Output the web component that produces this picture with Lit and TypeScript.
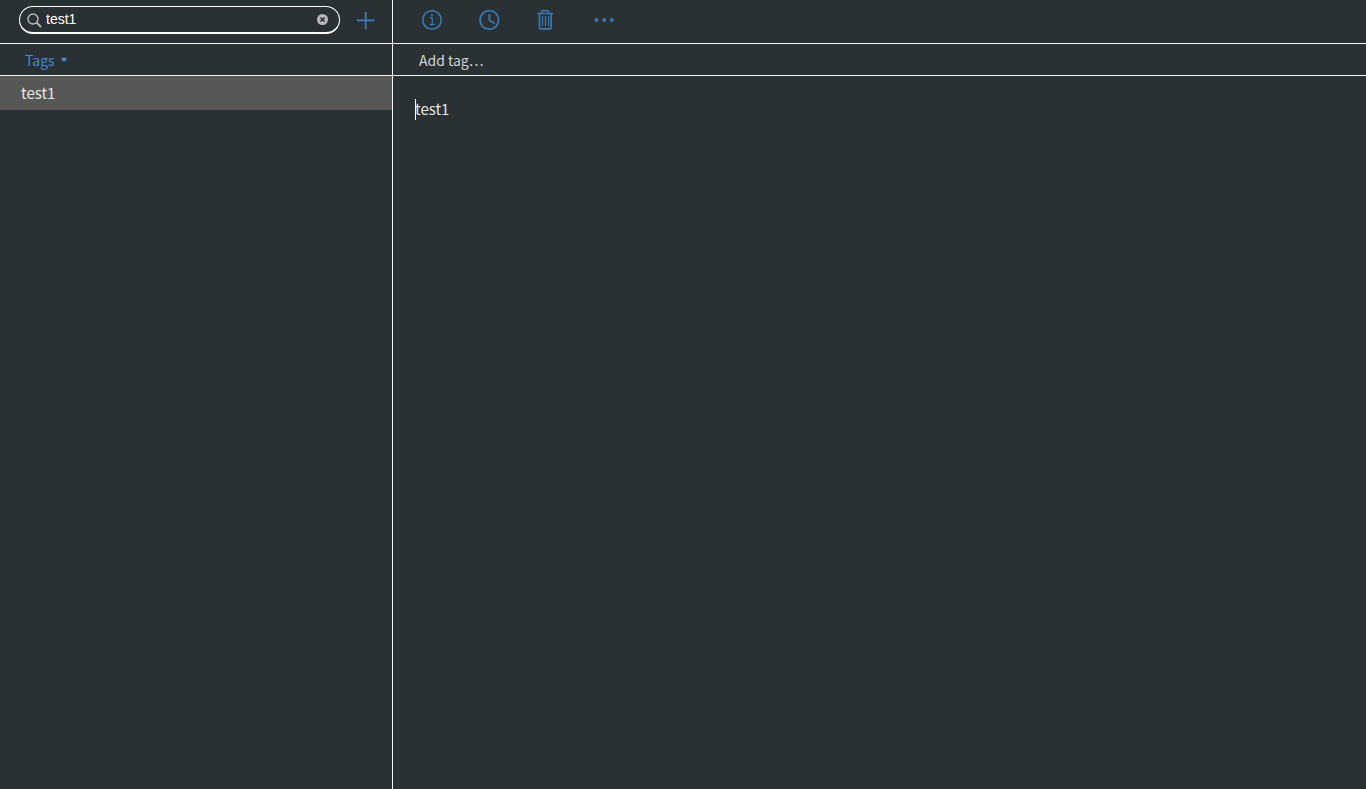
import { LitElement, html, css } from "lit";
import { customElement, state } from "lit/decorators.js";

@customElement("app-root")
export class AppRoot extends LitElement {
  static styles = css`
    :host {
      display: flex;
      height: 100vh;
      overflow: hidden;
      background: #2a3135;
      color: #e6e6e2;
      font-family: "Noto Sans CJK JP", "Noto Sans", sans-serif;
      font-size: 15px;
      --line: #f4f4f4;
      --accent: #3a79b0;
    }
    * {
      box-sizing: border-box;
    }
    button,
    input,
    textarea {
      margin: 0;
      padding: 0;
      border: 0;
      outline: 0;
      background: none;
      color: inherit;
      font: inherit;
    }
    svg {
      display: block;
    }
    .sidebar {
      flex: 0 0 393px;
      display: flex;
      flex-direction: column;
      border-right: 1px solid var(--line);
    }
    .main {
      flex: 1;
      min-width: 0;
      display: flex;
      flex-direction: column;
    }
    .bar {
      display: flex;
      align-items: center;
      height: 44px;
      padding-bottom: 3px;
      border-bottom: 1px solid var(--line);
    }
    .sidebar .bar {
      padding-left: 19px;
      padding-right: 16px;
      gap: 16px;
    }
    .main .bar {
      padding-left: 28px;
      gap: 35px;
    }
    .search {
      flex: 1;
      min-width: 0;
      display: flex;
      align-items: center;
      gap: 4px;
      height: 28px;
      padding: 0 11px 0 7px;
      border: 1px solid #ffffff;
      border-bottom-width: 2px;
      border-radius: 14px;
    }
    .search input {
      flex: 1;
      min-width: 0;
      height: 20px;
      padding-bottom: 2px;
      color: #ffffff;
      font-family: "Liberation Sans", Arial, sans-serif;
      font-size: 14px;
    }
    .icon {
      display: block;
      color: var(--accent);
      cursor: pointer;
    }
    .row {
      display: flex;
      align-items: center;
      height: 32px;
      border-bottom: 1px solid var(--line);
      font-size: 14px;
      line-height: 20px;
    }
    .tags {
      display: flex;
      align-items: center;
      gap: 6px;
      padding: 1px 0 0 25px;
      color: #4388cf;
    }
    .addtag {
      width: 100%;
      height: 20px;
      padding-left: 26px;
    }
    .addtag::placeholder {
      color: #d4d4d0;
      opacity: 1;
    }
    .notes {
      list-style: none;
      margin: 0;
      padding: 0;
    }
    .note {
      display: block;
      width: 100%;
      height: 34px;
      padding: 0 21px;
      text-align: left;
      line-height: 24px;
    }
    .note.selected {
      background: #575757;
    }
    .editor {
      position: relative;
      flex: 1;
      display: flex;
      padding: 21px 22px;
    }
    .editor textarea {
      flex: 1;
      resize: none;
      line-height: 24px;
    }
    .caret {
      position: absolute;
      left: 22px;
      top: 23px;
      width: 1px;
      height: 21px;
      background: #ffffff;
    }
  `;

  @state() private query = "test1";
  @state() private notes = ["test1"];
  @state() private selected = 0;

  render() {
    return html`
      <aside class="sidebar">
        <div class="bar">
          <div class="search">
            <svg width="15" height="16" viewBox="0 0 15 16" fill="none" stroke="#b4b6b7" stroke-width="1.5" aria-hidden="true">
              <circle cx="6" cy="7" r="5" />
              <path d="M9.7 10.7 14 15" stroke-width="1.8" />
            </svg>
            <input
              type="text"
              aria-label="Search"
              .value=${this.query}
              @input=${(e: Event) => (this.query = (e.target as HTMLInputElement).value)}
            />
            <button class="icon" aria-label="Clear search" @click=${() => (this.query = "")}>
              <svg width="11" height="11" viewBox="0 0 11 11">
                <circle cx="5.5" cy="5.5" r="5.5" fill="#b8b8b8" />
                <path d="M3.5 3.5l4 4M7.5 3.5l-4 4" stroke="#2a3135" stroke-width="1.7" />
              </svg>
            </button>
          </div>
          <button class="icon" aria-label="New note">
            <svg width="20" height="20" viewBox="0 0 20 20" fill="none" stroke="#3d82c4" stroke-width="1.6">
              <path d="M1 10.4h17.5M9.7 2v17" />
            </svg>
          </button>
        </div>
        <div class="row">
          <button class="tags">
            Tags
            <svg width="6" height="4" viewBox="0 0 6 4" fill="currentColor" aria-hidden="true">
              <path d="M0 0h6L3.5 4h-1z" />
            </svg>
          </button>
        </div>
        <ul class="notes">
          ${this.notes.map(
            (note, i) => html`<li>
              <button class="note ${i === this.selected ? "selected" : ""}" @click=${() => (this.selected = i)}>${note}</button>
            </li>`
          )}
        </ul>
      </aside>
      <main class="main">
        <div class="bar">
          <button class="icon" aria-label="Info">
            <svg width="22" height="22" viewBox="0 0 22 22" fill="none" stroke="currentColor">
              <circle cx="11" cy="11" r="9.3" stroke-width="1.6" />
              <path d="M9 8.7h2.2v7M8.8 15.7h4.7" stroke-width="1.3" />
              <circle cx="11" cy="6" r="1.1" fill="currentColor" stroke="none" />
            </svg>
          </button>
          <button class="icon" aria-label="History">
            <svg width="22" height="22" viewBox="0 0 22 22" fill="none" stroke="currentColor" stroke-width="1.8">
              <circle cx="11.3" cy="11" r="9.3" />
              <path d="M11.4 5v6.3l5.4 3.2" />
            </svg>
          </button>
          <button class="icon" aria-label="Delete">
            <svg width="22" height="22" viewBox="0 0 22 22" fill="none" stroke="currentColor">
              <path d="M2.5 4.5h15.5M6.5 4V2.4Q6.5 1.7 7.300 1.700h5.400q.8 0 .8.700V4" stroke-width="1.5" />
              <path d="M4.500 4.500v14.300q0 1 1 1h9.600q1 0 1-1V4.500" stroke-width="1.700" />
              <path d="M7.500 7v10.500M10.500 7v10.500M13.500 7v10.500" stroke-width="1.200" />
            </svg>
          </button>
          <button class="icon" aria-label="More">
            <svg width="22" height="22" viewBox="0 0 22 22" fill="currentColor">
              <circle cx="4.500" cy="11" r="1.900" />
              <circle cx="12.200" cy="11" r="1.900" />
              <circle cx="19.800" cy="11" r="1.900" />
            </svg>
          </button>
        </div>
        <div class="row">
          <input class="addtag" type="text" aria-label="Add tag" placeholder="Add tag…" />
        </div>
        <div class="editor">
          <textarea aria-label="Note" spellcheck="false" .value=${this.notes[this.selected]}></textarea>
          <span class="caret"></span>
        </div>
      </main>
    `;
  }
}
